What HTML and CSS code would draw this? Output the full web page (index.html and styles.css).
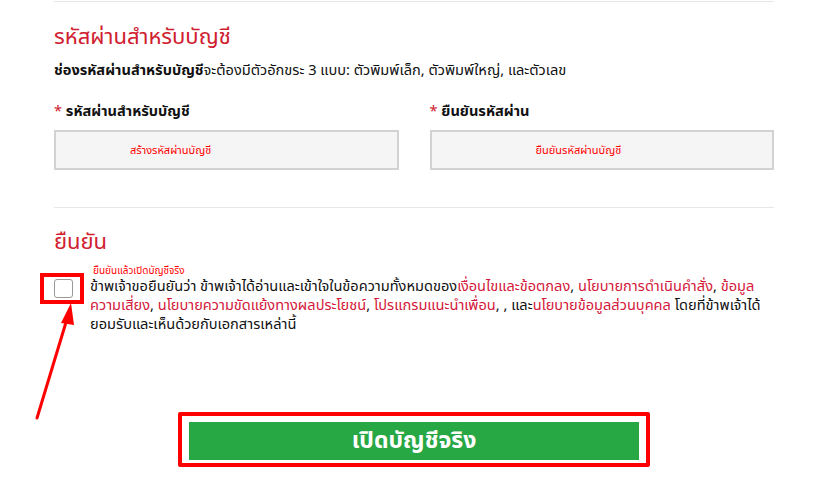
FILE: index.html
```html
<!DOCTYPE html>
<html lang="th">

<head>
  <meta charset="UTF-8">
  <meta name="viewport" content="width=device-width, initial-scale=1.0">
  <title>เปิดบัญชีจริง</title>
  <link rel="stylesheet" href="styles.css">
</head>

<body>
  <div class="page">
    <!-- รหัสผ่าน -->
    <section class="sec sec-password">
      <h2 class="sec-title">รหัสผ่านสำหรับบัญชี</h2>
      <p class="sec-desc"><b>ช่องรหัสผ่านสำหรับบัญชี</b>จะต้องมีตัวอักขระ 3 แบบ: ตัวพิมพ์เล็ก, ตัวพิมพ์ใหญ่, และตัวเลข</p>
      <div class="fields">
        <div class="field">
          <label class="field-label"><span class="req">*</span> รหัสผ่านสำหรับบัญชี</label>
          <input class="field-input field-input-a" type="password" placeholder="สร้างรหัสผ่านบัญชี">
        </div>
        <div class="field">
          <label class="field-label"><span class="req">*</span> ยืนยันรหัสผ่าน</label>
          <input class="field-input field-input-b" type="password" placeholder="ยืนยันรหัสผ่านบัญชี">
        </div>
      </div>
    </section>

    <!-- ยืนยัน -->
    <section class="sec sec-confirm">
      <h2 class="sec-title">ยืนยัน</h2>
      <div class="agree">
        <div class="agree-box">
          <input type="checkbox" id="agree">
        </div>
        <div class="agree-body">
          <span class="agree-hint">ยืนยันแล้วเปิดบัญชีจริง</span>
          <label class="agree-text" for="agree">ข้าพเจ้าขอยืนยันว่า ข้าพเจ้าได้อ่านและเข้าใจในข้อความทั้งหมดของ<a href="javascript:;">เงื่อนไขและข้อตกลง</a>, <a href="javascript:;">นโยบายการดำเนินคำสั่ง</a>, <a href="javascript:;">ข้อมูลความเสี่ยง</a>, <a href="javascript:;">นโยบายความขัดแย้งทางผลประโยชน์</a>, <a href="javascript:;">โปรแกรมแนะนำเพื่อน</a>, , และ<a href="javascript:;">นโยบายข้อมูลส่วนบุคคล</a> โดยที่ข้าพเจ้าได้ยอมรับและเห็นด้วยกับเอกสารเหล่านี้</label>
        </div>
        <!-- กรอบแดงชี้ช่องติ๊ก -->
        <span class="mark mark-check"></span>
        <svg class="mark-arrow" width="50" height="130" viewBox="0 0 50 130">
          <line x1="2" y1="121" x2="32" y2="22" stroke="#f00" stroke-width="3" stroke-linecap="round" />
          <polygon points="36,6 26,26 39,28" fill="#f00" />
        </svg>
      </div>
    </section>

    <div class="actions">
      <div class="actions-mark">
        <button class="btn-open" type="button">เปิดบัญชีจริง</button>
      </div>
    </div>
  </div>
</body>

</html>
```

FILE: styles.css
```css
* {
  margin: 0;
  padding: 0;
  box-sizing: border-box;
}

body {
  font-family: Tahoma, "Noto Sans Thai", "Noto Sans", "Liberation Sans", sans-serif;
  font-size: 14.6px;
  color: #111;
  background: #fff;
}

a {
  color: #d3183a;
  text-decoration: none;
}

.page {
  width: 720px;
  margin-left: 54px;
  padding-top: 1px;
}

/* หัวข้อแต่ละส่วน */
.sec {
  border-top: 1px solid #e6e6e6;
}
.sec-title {
  font-size: 22px;
  font-weight: normal;
  color: #d0202f;
  line-height: 30px;
}
.sec-password .sec-title {
  margin-top: 21px;
}
.sec-desc {
  margin-top: 8px;
  line-height: 20px;
}

/* ช่องกรอกรหัสผ่าน */
.fields {
  display: flex;
  gap: 31px;
  margin-top: 21px;
  padding-bottom: 37px;
}
.field {
  flex: 1;
}
.field-label {
  display: block;
  font-weight: bold;
  line-height: 20px;
}
.req {
  color: #d0202f;
  font-weight: normal;
}
.field-input {
  display: block;
  width: 100%;
  height: 40px;
  margin-top: 8px;
  border: 2px solid #d2d2d2;
  background: #f5f5f5;
  font-family: inherit;
  font-size: 11px;
  outline: none;
}
.field-input::placeholder {
  color: #f00;
  opacity: 1;
}
.field-input-a {
  padding-left: 74px;
}
.field-input-b {
  padding-left: 104px;
}

/* ยืนยัน */
.sec-confirm .sec-title {
  margin-top: 20px;
}
.agree {
  position: relative;
  display: flex;
  gap: 17px;
  margin-top: 6px;
}
.agree-box {
  padding-top: 15px;
}
.agree-box input {
  appearance: none;
  display: block;
  width: 19px;
  height: 19px;
  border: 1px solid #999;
  border-radius: 3px;
  background: #fff;
}
.agree-body {
  flex: 1;
}
.agree-hint {
  display: block;
  padding-left: 3px;
  font-size: 10px;
  line-height: 14px;
  color: #f00;
}
.agree-text {
  display: block;
  line-height: 19px;
}

/* เครื่องหมายชี้ */
.mark {
  position: absolute;
  border: 4px solid #f00;
}
.mark-check {
  left: -14px;
  top: 9px;
  width: 44px;
  height: 31px;
}
.mark-arrow {
  position: absolute;
  left: -19px;
  top: 33px;
}

/* ปุ่มเปิดบัญชี */
.actions {
  display: flex;
  justify-content: center;
  margin-top: 77px;
}
.actions-mark {
  border: 4px solid #f00;
  border-radius: 2px;
  padding: 6px 7px 3px;
}
.btn-open {
  display: block;
  width: 450px;
  height: 38px;
  border: 0;
  background: #28a745;
  color: #fff;
  font-family: inherit;
  font-size: 23px;
  font-weight: bold;
  line-height: 38px;
}
```
